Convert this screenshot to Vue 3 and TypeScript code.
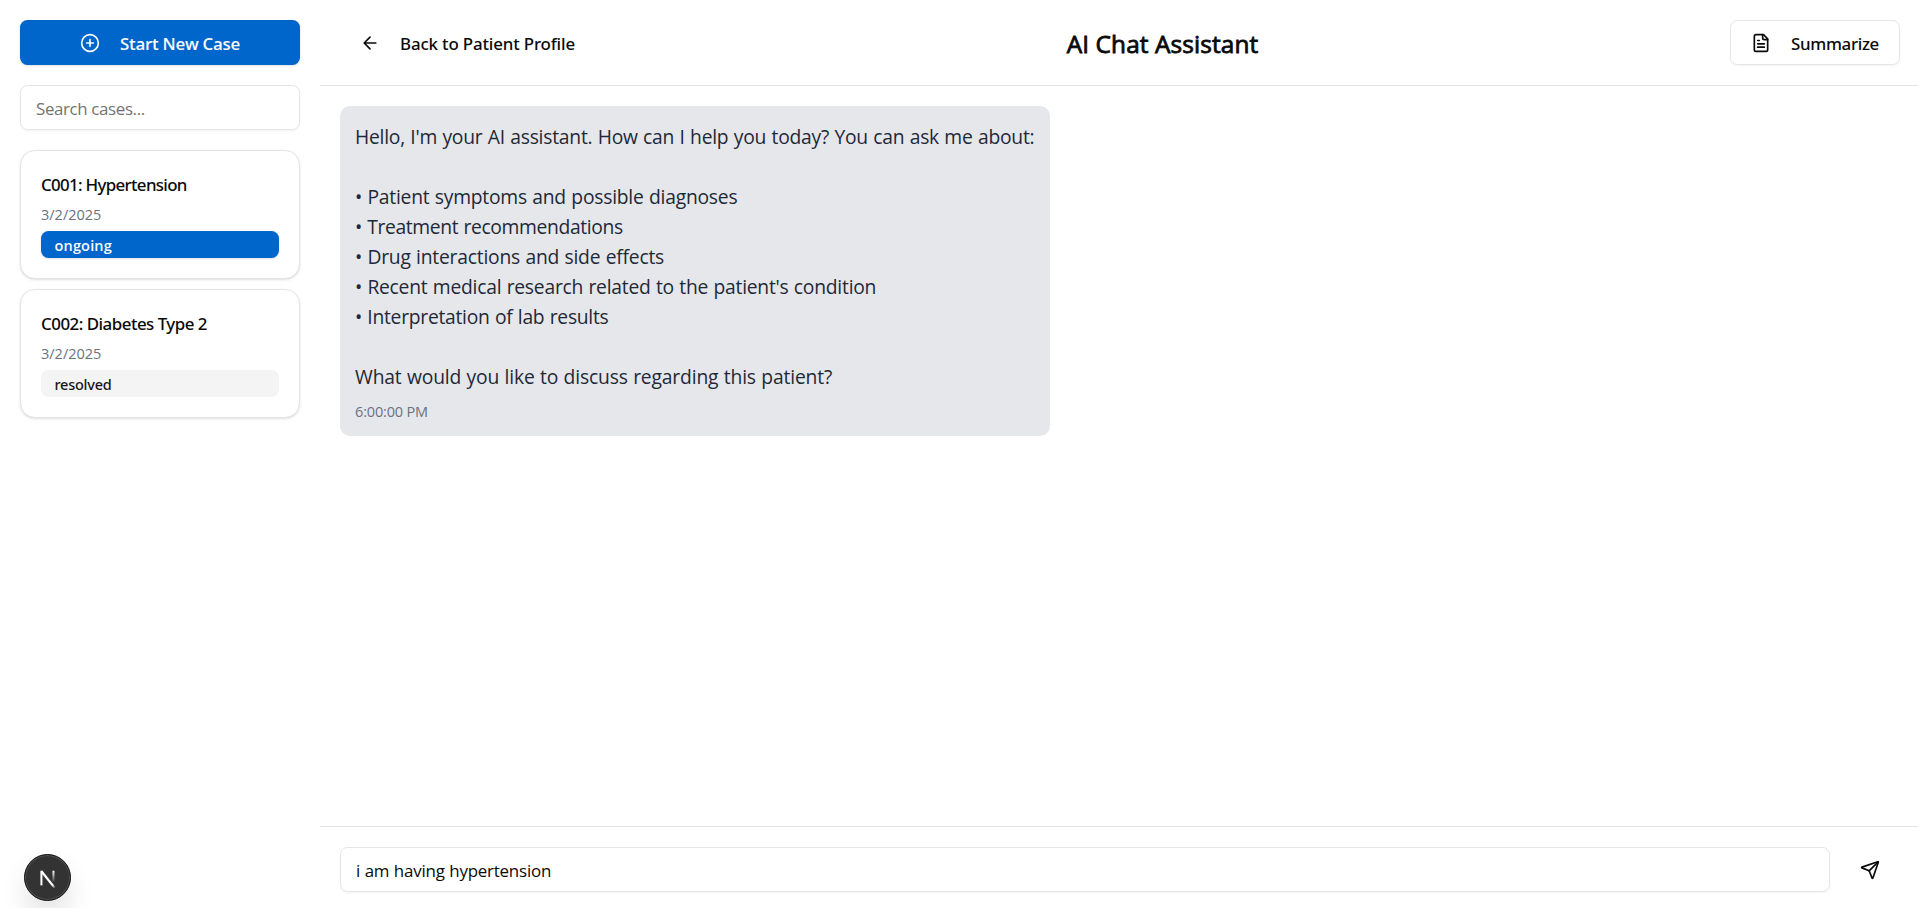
<script setup lang="ts">
import { ref } from 'vue'

interface CaseItem {
  id: string
  title: string
  date: string
  status: 'ongoing' | 'resolved'
  tracking: number
}

interface Line {
  text: string
  tracking: number
}

const search = ref('')
const draft = ref('i am having hypertension')

const cases: CaseItem[] = [
  { id: 'C001', title: 'Hypertension', date: '3/2/2025', status: 'ongoing', tracking: -0.68 },
  { id: 'C002', title: 'Diabetes Type 2', date: '3/2/2025', status: 'resolved', tracking: -0.5 },
]

const lines: Line[] = [
  { text: "Hello, I'm your AI assistant. How can I help you today? You can ask me about:", tracking: -0.24 },
  { text: '', tracking: 0 },
  { text: '• Patient symptoms and possible diagnoses', tracking: -0.23 },
  { text: '• Treatment recommendations', tracking: -0.36 },
  { text: '• Drug interactions and side effects', tracking: -0.22 },
  { text: "• Recent medical research related to the patient's condition", tracking: -0.24 },
  { text: '• Interpretation of lab results', tracking: -0.27 },
  { text: '', tracking: 0 },
  { text: 'What would you like to discuss regarding this patient?', tracking: -0.17 },
]
</script>

<template>
  <div class="app">
    <aside class="sidebar">
      <button class="btn primary" type="button">
        <svg class="icon" viewBox="0 0 24 24"><circle cx="12" cy="12" r="10" /><path d="M8 12h8M12 8v8" /></svg>
        <span>Start New Case</span>
      </button>
      <input v-model="search" class="field search" placeholder="Search cases..." />
      <div class="cases">
        <article v-for="c in cases" :key="c.id" class="card">
          <h3 :style="{ letterSpacing: c.tracking + 'px' }">{{ c.id }}: {{ c.title }}</h3>
          <p class="date">{{ c.date }}</p>
          <div class="badge" :class="c.status">{{ c.status }}</div>
        </article>
      </div>
    </aside>

    <main class="main">
      <header class="header">
        <button class="btn ghost" type="button">
          <svg class="icon" viewBox="0 0 24 24"><path d="m12 19-7-7 7-7M19 12H5" /></svg>
          <span>Back to Patient Profile</span>
        </button>
        <h1>AI Chat Assistant</h1>
        <button class="btn outline" type="button">
          <svg class="icon" viewBox="0 0 24 24">
            <path d="M15 2H6a2 2 0 0 0-2 2v16a2 2 0 0 0 2 2h12a2 2 0 0 0 2-2V7Z" />
            <path d="M14 2v4a2 2 0 0 0 2 2h4M10 9H8M16 13H8M16 17H8" />
          </svg>
          <span>Summarize</span>
        </button>
      </header>

      <section class="messages">
        <div class="bubble">
          <p v-for="(l, i) in lines" :key="i" class="line" :style="{ letterSpacing: l.tracking + 'px' }">{{ l.text }}</p>
          <p class="time">6:00:00 PM</p>
        </div>
      </section>

      <footer class="composer">
        <input v-model="draft" class="field message" />
        <button class="btn send" type="button" aria-label="Send">
          <svg class="icon" viewBox="0 0 24 24">
            <path d="M14.536 21.686a.5.5 0 0 0 .937-.024l6.5-19a.496.496 0 0 0-.635-.635l-19 6.5a.5.5 0 0 0-.024.937l7.93 3.18a2 2 0 0 1 1.112 1.11z" />
            <path d="m21.854 2.147-10.94 10.939" />
          </svg>
        </button>
      </footer>
    </main>

    <div class="dev-badge">
      <svg viewBox="0 0 40 40" fill="none">
        <defs>
          <linearGradient id="diag" x1="21" y1="22" x2="27" y2="29.5" gradientUnits="userSpaceOnUse">
            <stop stop-color="#fff" /><stop offset="0.6" stop-color="#fff" /><stop offset="1" stop-color="#fff" stop-opacity="0" />
          </linearGradient>
          <linearGradient id="stem" x1="25" y1="14" x2="25" y2="24.5" gradientUnits="userSpaceOnUse">
            <stop stop-color="#fff" /><stop offset="1" stop-color="#fff" stop-opacity="0" />
          </linearGradient>
        </defs>
        <path d="M14.6 27V14" stroke="#fff" stroke-width="1.8" />
        <path d="M14.6 14.4 26.4 29.2" stroke="url(#diag)" stroke-width="2" />
        <path d="M25.3 14V24.5" stroke="url(#stem)" stroke-width="1.8" />
      </svg>
    </div>
  </div>
</template>

<style>
html,
body {
  margin: 0;
  overflow: hidden;
  background: #fff;
}
</style>

<style scoped>
.app {
  display: flex;
  height: 908px;
  width: 1920px;
  overflow: hidden;
  box-sizing: border-box;
  color: #0a0a0a;
  font-family: 'Open Sans', 'Liberation Sans', sans-serif;
}
.app *,
.app *::before {
  box-sizing: border-box;
}
h1,
h3,
p {
  margin: 0;
}
.sidebar {
  width: 320px;
  flex: none;
  padding: 20px;
}
.btn {
  display: flex;
  align-items: center;
  justify-content: center;
  gap: 20px;
  height: 45px;
  padding: 0 20px;
  border: 0;
  border-radius: 7.5px;
  background: transparent;
  color: #0a0a0a;
  font: 500 16.9px/25px 'Noto Sans', sans-serif;
  white-space: nowrap;
}
.btn span {
  padding-top: 1px;
}
.icon {
  width: 20px;
  height: 20px;
  flex: none;
  fill: none;
  stroke: currentColor;
  stroke-width: 2;
  stroke-linecap: round;
  stroke-linejoin: round;
}
.primary {
  width: 280px;
  background: #0066cc;
  color: #fafafa;
  font: 600 16.9px/25px 'Open Sans', sans-serif;
  letter-spacing: -0.27px;
  box-shadow: 0 1px 3px rgba(0, 0, 0, 0.1), 0 1px 2px -1px rgba(0, 0, 0, 0.1);
}
.ghost {
  letter-spacing: -0.15px;
}
.outline {
  border: 1px solid #e5e5e5;
  letter-spacing: -0.34px;
  box-shadow: 0 1px 2px rgba(0, 0, 0, 0.05);
}
.send {
  width: 60px;
}
.field {
  height: 45px;
  padding: 1px 15px 0;
  border: 1px solid #e5e5e5;
  border-radius: 7.5px;
  outline: none;
  background: transparent;
  color: #0a0a0a;
  font: 400 16.9px/25px 'Open Sans', sans-serif;
  box-shadow: 0 1px 2px rgba(0, 0, 0, 0.05);
}
.field::placeholder {
  color: #737373;
  opacity: 1;
}
.search {
  display: block;
  width: 280px;
  margin-top: 20px;
  letter-spacing: -0.36px;
}
.cases {
  display: grid;
  gap: 10px;
  margin-top: 20px;
}
.card {
  padding: 19px 20px 20px;
  height: 129px;
  border: 1px solid #e5e5e5;
  border-radius: 15px;
  background: #fff;
  box-shadow: 0 1px 3px rgba(0, 0, 0, 0.1), 0 1px 2px -1px rgba(0, 0, 0, 0.1);
}
.card h3 {
  font: 500 16.9px/30px 'Noto Sans', sans-serif;
}
.date {
  margin-bottom: 1px;
  color: #6b7280;
  font-size: 14.5px;
  line-height: 30px;
}
.badge {
  height: 27px;
  padding: 2px 13.5px 0;
  border-radius: 7.5px;
  font-size: 14.5px;
  line-height: 25px;
}
.ongoing {
  background: #0066cc;
  color: #fafafa;
  font-weight: 600;
  letter-spacing: 0.17px;
  box-shadow: 0 1px 3px rgba(0, 0, 0, 0.1), 0 1px 2px -1px rgba(0, 0, 0, 0.1);
}
.resolved {
  background: #f4f4f4;
  color: #171717;
  font-family: 'Noto Sans', sans-serif;
  font-weight: 500;
  letter-spacing: -0.25px;
}
.main {
  display: flex;
  flex: 1;
  flex-direction: column;
  min-width: 0;
}
.header {
  display: flex;
  align-items: center;
  justify-content: space-between;
  height: 86px;
  padding: 0 20px;
  border-bottom: 1px solid #e5e5e5;
}
.header h1 {
  padding-top: 1px;
  font-size: 24.4px;
  font-weight: 400;
  line-height: 35px;
  letter-spacing: 0.1px;
  -webkit-text-stroke: 0.8px #0a0a0a;
}
.messages {
  flex: 1;
  padding: 20px;
}
.bubble {
  width: 710px;
  height: 330px;
  padding: 16px 15px 14px;
  border-radius: 10px;
  background: #e5e7eb;
  color: #1f2937;
}
.line {
  height: 30px;
  font-size: 19.3px;
  line-height: 30px;
  white-space: nowrap;
  word-spacing: 0.6px;
}
.time {
  margin-top: 9px;
  color: #6b7280;
  font-size: 14.5px;
  line-height: 20px;
  padding-top: 1px;
  letter-spacing: -0.16px;
}
.composer {
  display: flex;
  gap: 10px;
  height: 82px;
  padding: 20px 20px 0;
  border-top: 1px solid #e5e5e5;
}
.message {
  flex: 1;
  min-width: 0;
  letter-spacing: -0.2px;
  word-spacing: 0.4px;
}
.dev-badge {
  position: absolute;
  left: 24px;
  top: 854px;
  width: 47px;
  height: 47px;
  border-radius: 50%;
  background: #333;
  border: 1px solid #111;
  box-shadow: inset 0 0 0 1px #505050, 0 16px 32px -8px rgba(0, 0, 0, 0.24);
}
.dev-badge svg {
  display: block;
  width: 45px;
  height: 45px;
}
</style>
